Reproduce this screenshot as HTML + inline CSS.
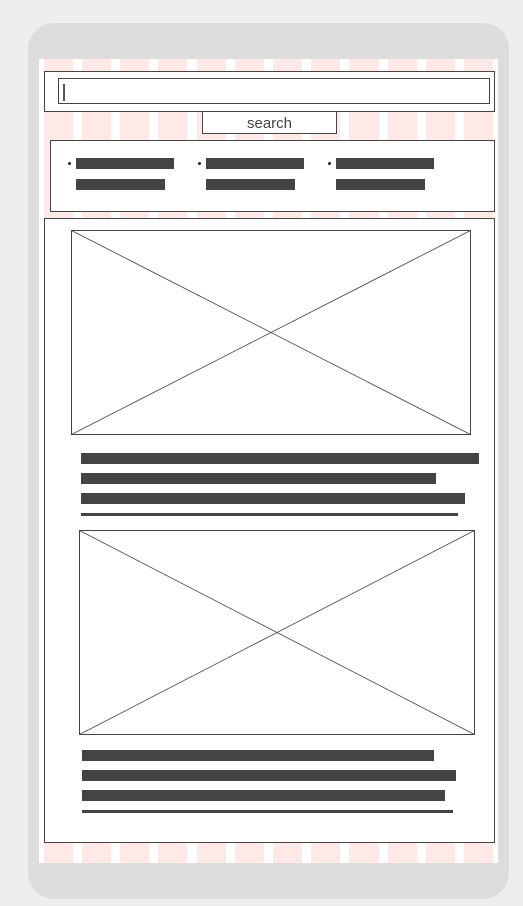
<!DOCTYPE html><html><head><style>
*{margin:0;padding:0;box-sizing:border-box}
body{width:523px;height:906px;background:#eeeeee;position:relative;overflow:hidden;font-family:"Liberation Sans",sans-serif}
.a{position:absolute}
.dev{left:28px;top:23px;width:481px;height:876px;background:#dddddd;border-radius:26px}
.scr{left:39px;top:59px;width:459px;height:804px;background:#fff}
.col{position:absolute;top:59px;height:804px;width:29px;background:#fee9e6}
.box{position:absolute;background:#fff;border:1px solid #444}
.bar{position:absolute;background:#444}
.dot{position:absolute;width:3px;height:3px;border-radius:50%;background:#222}
</style></head><body>
<div class="a dev"></div>
<div class="a scr"></div>
<div class="col" style="left:44px"></div><div class="col" style="left:82px"></div><div class="col" style="left:120px"></div><div class="col" style="left:158px"></div><div class="col" style="left:197px"></div><div class="col" style="left:235px"></div><div class="col" style="left:273px"></div><div class="col" style="left:311px"></div><div class="col" style="left:349px;width:30px"></div><div class="col" style="left:388px"></div><div class="col" style="left:426px"></div><div class="col" style="left:464px"></div>
<div class="box" style="left:44px;top:71px;width:451px;height:41px"></div>
<div class="box" style="left:58px;top:78px;width:432px;height:26px"></div>
<div class="bar" style="left:63px;top:84px;width:2px;height:17px;background:#555"></div>
<div class="box" style="left:202px;top:111px;width:135px;height:23px;font-size:15px;color:#444;text-align:center;line-height:23px">search</div>
<div class="box" style="left:50px;top:140px;width:445px;height:72px"></div>
<div class="dot" style="left:68px;top:162px"></div><div class="bar" style="left:76px;top:158px;width:98px;height:11px"></div><div class="bar" style="left:76px;top:179px;width:89px;height:11px"></div>
<div class="dot" style="left:198px;top:162px"></div><div class="bar" style="left:206px;top:158px;width:98px;height:11px"></div><div class="bar" style="left:206px;top:179px;width:89px;height:11px"></div>
<div class="dot" style="left:328px;top:162px"></div><div class="bar" style="left:336px;top:158px;width:98px;height:11px"></div><div class="bar" style="left:336px;top:179px;width:89px;height:11px"></div>
<div class="box" style="left:44px;top:218px;width:451px;height:625px"></div>
<svg class="a" style="left:71px;top:230px" width="400" height="205"><rect x="0.5" y="0.5" width="399" height="204" fill="#fff" stroke="#444"/><path d="M0.5 0.5L399.5 204.5M399.5 0.5L0.5 204.5" stroke="#444" stroke-width="0.8"/></svg>
<div class="bar" style="left:81px;top:453px;width:398px;height:11px"></div>
<div class="bar" style="left:81px;top:473px;width:355px;height:11px"></div>
<div class="bar" style="left:81px;top:493px;width:384px;height:11px"></div>
<div class="bar" style="left:81px;top:513px;width:377px;height:3px"></div>
<svg class="a" style="left:79px;top:530px" width="396" height="205"><rect x="0.5" y="0.5" width="395" height="204" fill="#fff" stroke="#444"/><path d="M0.5 0.5L395.5 204.5M395.5 0.5L0.5 204.5" stroke="#444" stroke-width="0.8"/></svg>
<div class="bar" style="left:82px;top:750px;width:352px;height:11px"></div>
<div class="bar" style="left:82px;top:770px;width:374px;height:11px"></div>
<div class="bar" style="left:82px;top:790px;width:363px;height:11px"></div>
<div class="bar" style="left:82px;top:810px;width:371px;height:3px"></div>
</body></html>
